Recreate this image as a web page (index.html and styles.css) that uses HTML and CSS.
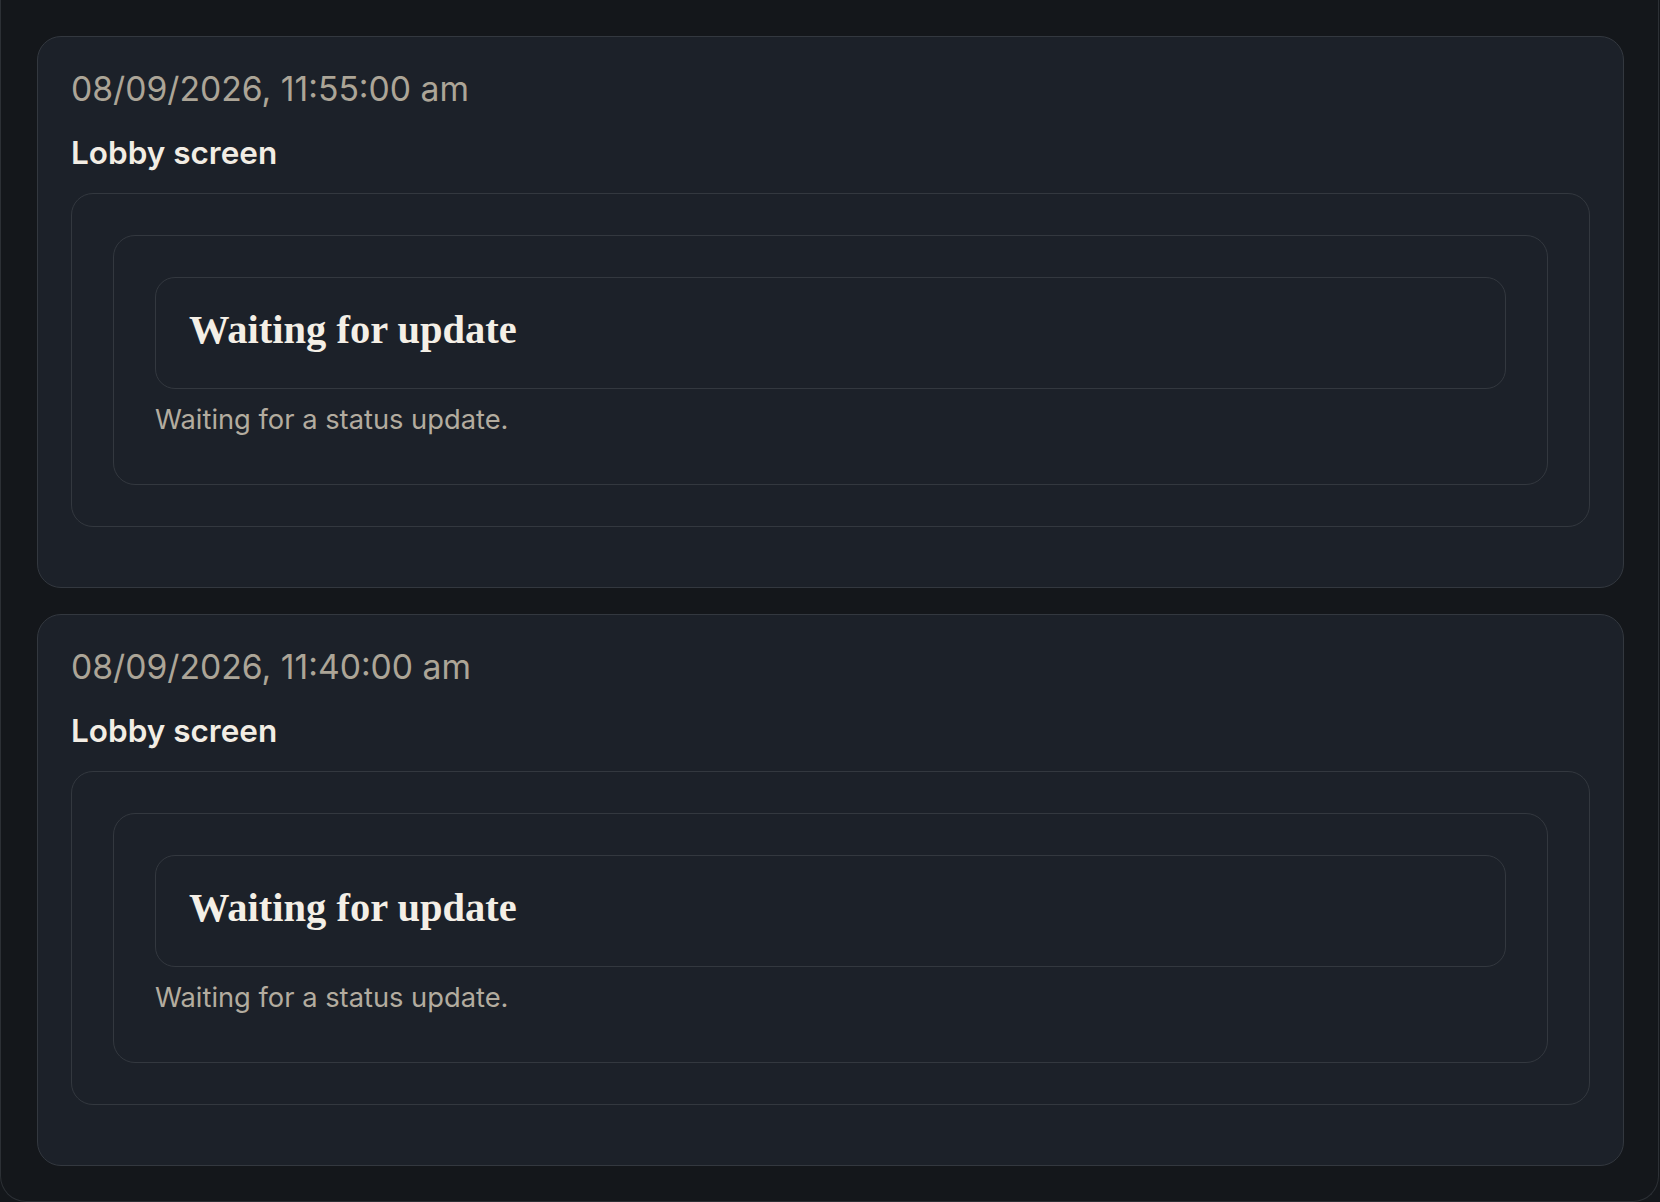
FILE: index.html
```html
<!DOCTYPE html>
<html lang="en">
<head>
  <meta charset="UTF-8">
  <title>Status history</title>
  <link rel="stylesheet" href="styles.css">
</head>
<body>

  <div class="history">
    <!-- Entry 1 -->
    <div class="entry">
      <div class="entry-time">08/09/2026, 11:55:00 am</div>
      <div class="entry-screen">Lobby screen</div>
      <div class="frame">
        <div class="panel">
          <div class="status-box">
            <h3>Waiting for update</h3>
          </div>
          <p class="status-note">Waiting for a status update.</p>
        </div>
      </div>
    </div>

    <!-- Entry 2 -->
    <div class="entry">
      <div class="entry-time">08/09/2026, 11:40:00 am</div>
      <div class="entry-screen">Lobby screen</div>
      <div class="frame">
        <div class="panel">
          <div class="status-box">
            <h3>Waiting for update</h3>
          </div>
          <p class="status-note">Waiting for a status update.</p>
        </div>
      </div>
    </div>
  </div>

</body>
</html>
```

FILE: styles.css
```css
* {
  box-sizing: border-box;
}

html, body {
  margin: 0;
  padding: 0;
  background: #14171b;
  font-family: Inter, "Noto Sans", sans-serif;
}

.history {
  width: 1659px;
  display: flex;
  flex-direction: column;
  gap: 26px;
  padding: 36px 34px 35px 36px;
  background: #14171b;
  border: 1px solid #2c3035;
  border-top: none;
  border-radius: 0 0 26px 26px;
}

.entry {
  background: #1c2129;
  border: 1px solid #33383f;
  border-radius: 24px;
  padding: 30px 33px 60px 33px;
}

.entry-time {
  font-size: 33.7px;
  line-height: 44px;
  color: #aca597;
}

.entry-screen {
  margin-top: 22px;
  font-size: 31.5px;
  line-height: 40px;
  font-weight: 600;
  color: #f2ede4;
}

.frame {
  margin-top: 20px;
  border: 1px solid #33383f;
  border-radius: 22px;
  padding: 41px;
}

.panel {
  border: 1px solid #33383f;
  border-radius: 22px;
  padding: 41px 41px 42px;
}

.status-box {
  border: 1px solid #33383f;
  border-radius: 20px;
  padding: 29px 33px 36px;
}

.status-box h3 {
  margin: 0;
  font-family: "Liberation Serif", "Times New Roman", serif;
  font-size: 40.5px;
  line-height: 45px;
  font-weight: bold;
  color: #f4efe6;
}

.status-note {
  margin: 9px 0 0;
  font-size: 27.3px;
  line-height: 44px;
  color: #b3ac9f;
}
```
